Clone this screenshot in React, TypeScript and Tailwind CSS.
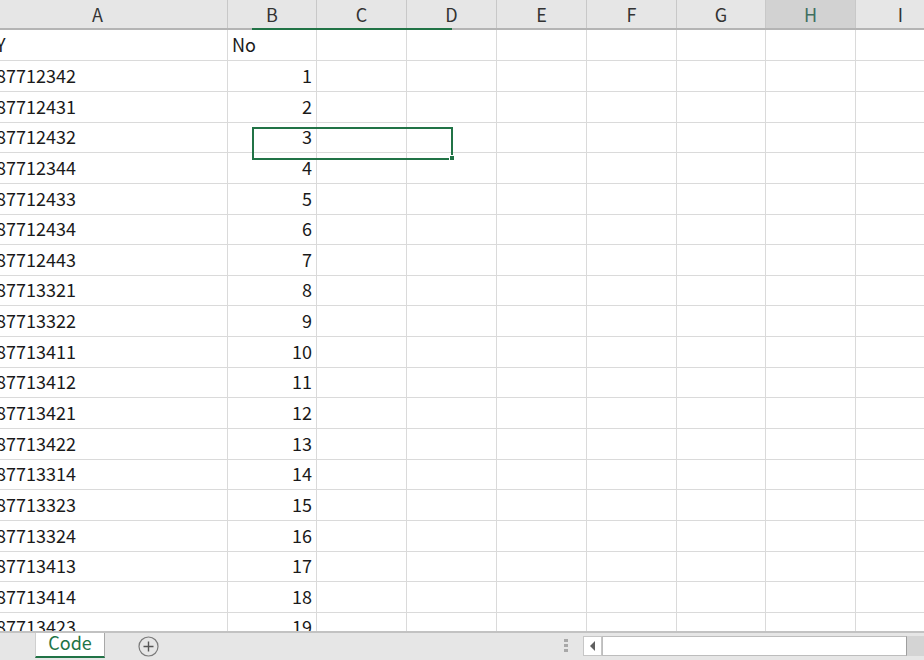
import React from 'react';

const cols = [
  { id: 'B', w: 'w-[89px]' },
  { id: 'C', w: 'w-[90px]' },
  { id: 'D', w: 'w-[90px]' },
  { id: 'E', w: 'w-[90px]' },
  { id: 'F', w: 'w-[90px]' },
  { id: 'G', w: 'w-[89px]' },
  { id: 'H', w: 'w-[90px]' },
  { id: 'I', w: 'w-[90px]' },
];

const rows: { a: string; b: string; h: number }[] = [
  { a: 'Y', b: 'No', h: 31 },
  { a: '87712342', b: '1', h: 31 },
  { a: '87712431', b: '2', h: 31 },
  { a: '87712432', b: '3', h: 30 },
  { a: '87712344', b: '4', h: 31 },
  { a: '87712433', b: '5', h: 31 },
  { a: '87712434', b: '6', h: 30 },
  { a: '87712443', b: '7', h: 31 },
  { a: '87713321', b: '8', h: 30 },
  { a: '87713322', b: '9', h: 31 },
  { a: '87713411', b: '10', h: 31 },
  { a: '87713412', b: '11', h: 30 },
  { a: '87713421', b: '12', h: 31 },
  { a: '87713422', b: '13', h: 31 },
  { a: '87713314', b: '14', h: 30 },
  { a: '87713323', b: '15', h: 31 },
  { a: '87713324', b: '16', h: 31 },
  { a: '87713413', b: '17', h: 30 },
  { a: '87713414', b: '18', h: 31 },
  { a: '87713423', b: '19', h: 30 },
];

const App: React.FC = () => {
  return (
    <div
      className="w-[924px] h-[660px] overflow-hidden bg-white flex flex-col text-[18px] text-[#1a1a1a]"
      style={{ fontFamily: '"Noto Sans CJK JP", "Noto Sans", sans-serif' }}
    >
      {/* sheet */}
      <div className="relative h-[631px] overflow-hidden shrink-0">
        {/* column headers */}
        <div className="flex h-[30px] bg-[#e6e6e6] border-b-2 border-[#b4b4b4] text-[#333]">
          <div className="w-[228px] shrink-0 pr-[32px] flex items-center justify-center border-r border-[#c8c8c8] leading-none">
            A
          </div>
          {cols.map((c) => (
            <div
              key={c.id}
              className={`${c.w} shrink-0 flex items-center justify-center border-r border-[#c8c8c8] leading-none ${
                c.id === 'H' ? 'bg-[#d2d2d2] text-[#3f6f60]' : ''
              }`}
            >
              {c.id}
            </div>
          ))}
        </div>

        {/* rows */}
        {rows.map((r, i) => (
          <div key={i} className={`flex ${r.h === 31 ? 'h-[31px]' : 'h-[30px]'}`}>
            <div className="w-[228px] shrink-0 overflow-hidden flex items-end pb-[5px] border-r border-b border-[#dadada] leading-[22px] whitespace-nowrap">
              <span className="-ml-[4px]">{r.a}</span>
            </div>
            <div
              className={`w-[89px] shrink-0 flex items-end pb-[5px] border-r border-b border-[#dadada] leading-[22px] ${
                i === 0 ? 'justify-start pl-[4px]' : 'justify-end pr-[4px]'
              }`}
            >
              {r.b}
            </div>
            {cols.slice(1).map((c) => (
              <div key={c.id} className={`${c.w} shrink-0 border-r border-b border-[#dadada]`} />
            ))}
          </div>
        ))}

        {/* header highlight for selection */}
        <div className="absolute left-[252px] top-[28px] w-[200px] h-[2px] bg-[#217346]" />

        {/* selection */}
        <div className="absolute left-[252px] top-[127px] w-[201px] h-[33px] border-2 border-[#217346]" />
        <div className="absolute left-[449px] top-[155px] w-[6px] h-[6px] bg-[#217346] border border-white" />
      </div>

      {/* sheet tabs bar */}
      <div className="flex flex-1 bg-[#e6e6e6] border-t-2 border-[#c2c2c2]">
        <div className="ml-[35px] w-[70px] h-[25px] shrink-0 bg-white border-l border-r border-l-[#cfcfcf] border-r-[#a8a8a8] border-b-2 border-b-[#217346] flex items-center justify-center pb-[6px] text-[#217346] text-[18px] leading-none">
          Code
        </div>
        <div className="ml-[33px] mt-[3px] w-[21px] h-[21px] shrink-0">
          <svg width="21" height="21" viewBox="0 0 21 21">
            <circle cx="10.5" cy="10.5" r="9.5" fill="none" stroke="#7a7a7a" strokeWidth="1.2" />
            <path d="M10.5 5.5v10M5.5 10.5h10" stroke="#555" strokeWidth="1.4" />
          </svg>
        </div>
        <div className="ml-[405px] mt-[6px] w-[4px] shrink-0 flex flex-col gap-[2px]">
          <div className="w-[4px] h-[3px] bg-[#a8a8a8]" />
          <div className="w-[4px] h-[3px] bg-[#a8a8a8]" />
          <div className="w-[4px] h-[3px] bg-[#a8a8a8]" />
        </div>
        <div className="ml-[15px] mt-[3px] w-[19px] h-[20px] shrink-0 bg-white border border-[#c6c6c6] flex items-center justify-center">
          <svg width="8" height="12" viewBox="0 0 8 12">
            <path d="M6 1v10L1 6z" fill="#606060" />
          </svg>
        </div>
        <div className="mt-[3px] w-[305px] h-[20px] shrink-0 bg-white border border-[#bdbdbd] border-r-[#9e9e9e]" />
        <div className="mt-[3px] flex-1 h-[20px] bg-[#d4d4d4]" />
      </div>
    </div>
  );
};

export default App;
